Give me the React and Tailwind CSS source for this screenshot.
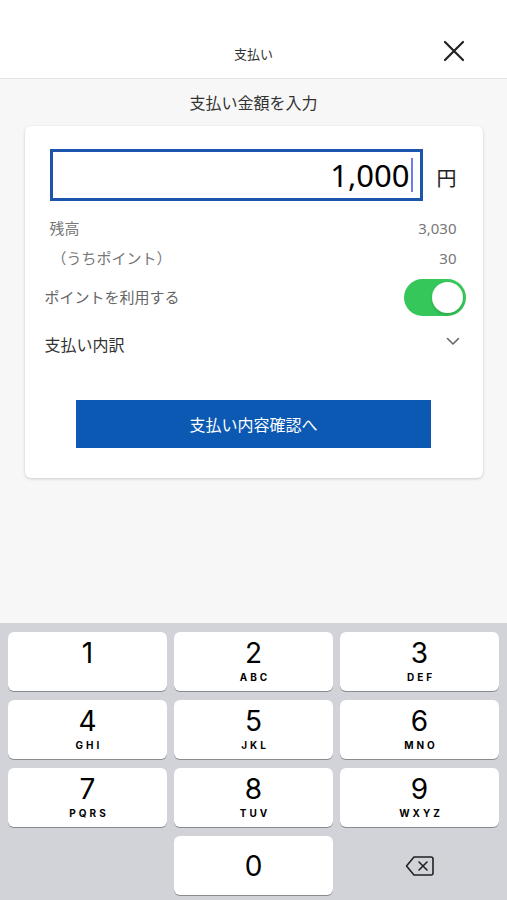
import React from 'react'

const jp = { fontFamily: '"Noto Sans CJK JP", "Noto Sans", sans-serif' }

const keys = [
  ['1', ''], ['2', 'ABC'], ['3', 'DEF'],
  ['4', 'GHI'], ['5', 'JKL'], ['6', 'MNO'],
  ['7', 'PQRS'], ['8', 'TUV'], ['9', 'WXYZ'],
]

const Key = ({ digit, letters }) => (
  <div className="h-[59px] bg-white rounded-[6px] shadow-[0_1px_0_#8a8b8f] flex flex-col items-center justify-start pt-[4px] font-['Inter',sans-serif] text-black">
    <span className="text-[28px] leading-[34px]">{digit}</span>
    {letters && <span className="text-[10px] font-bold tracking-[3px] pl-[3px] leading-[12px] mt-[1px]">{letters}</span>}
  </div>
)

const App = () => {
  return (
    <div className="w-[507px] h-[900px] flex flex-col bg-[#f7f7f7] overflow-hidden" style={jp}>
      <header className="h-[79px] bg-white border-b border-[#e3e3e3] relative">
        <div className="absolute top-[34px] left-0 right-0 h-[40px] flex items-center justify-center text-[13px] text-[#333]">支払い</div>
        <button className="absolute top-[38px] right-[40px] w-[26px] h-[26px] flex items-center justify-center">
          <svg width="22" height="22" viewBox="0 0 22 22" stroke="#222" strokeWidth="2.2" strokeLinecap="round">
            <path d="M2 2 L20 20 M20 2 L2 20" />
          </svg>
        </button>
      </header>

      <main className="flex-1 flex flex-col items-center">
        <h1 className="mt-[11px] text-[16px] leading-[24px] text-[#333]">支払い金額を入力</h1>
        <div className="mt-[12px] w-[458px] bg-white rounded-[6px] shadow-[0_1px_3px_rgba(0,0,0,0.18)] pt-[23px] pb-[30px]">
          <div className="flex items-center pl-[25px]">
            <div className="w-[373px] h-[52px] border-[3px] border-[#1d55ad] flex items-center justify-end pr-[7px]">
              <span className="text-[31px] text-black font-['Noto_Sans',sans-serif] leading-none">1,000</span>
              <span className="w-[2px] h-[34px] bg-[#6c7cf0] ml-[1px]" />
            </div>
            <span className="ml-[14px] text-[20px] text-[#222] mt-[6px]">円</span>
          </div>

          <div className="mt-[12px] h-[30px] flex items-center justify-between pl-[25px] pr-[26px] text-[15px] text-[#777]">
            <span>残高</span>
            <span className="font-['Noto_Sans',sans-serif]">3,030</span>
          </div>
          <div className="h-[30px] flex items-center justify-between pl-[27px] pr-[26px] text-[15px] text-[#777]">
            <span>（うちポイント）</span>
            <span className="font-['Noto_Sans',sans-serif]">30</span>
          </div>

          <div className="mt-[5px] h-[38px] flex items-center justify-between pl-[20px] pr-[17px]">
            <span className="text-[15px] text-[#666]">ポイントを利用する</span>
            <div className="w-[62px] h-[37px] rounded-full bg-[#35c759] flex items-center justify-end pr-[3px]">
              <div className="w-[31px] h-[31px] rounded-full bg-white shadow-[0_2px_3px_rgba(0,0,0,0.15)]" />
            </div>
          </div>

          <div className="mt-[10px] h-[36px] flex items-center justify-between pl-[20px] pr-[23px]">
            <span className="text-[16px] text-[#333]">支払い内訳</span>
            <svg width="14" height="9" viewBox="0 0 14 9" fill="none" stroke="#666" strokeWidth="1.6" strokeLinecap="round" strokeLinejoin="round" className="-mt-[6px]">
              <path d="M1.5 1.5 L7 7 L12.5 1.5" />
            </svg>
          </div>

          <div className="mt-[38px] flex justify-center">
            <button className="w-[355px] h-[48px] bg-[#0b59b3] text-white text-[16px]">支払い内容確認へ</button>
          </div>
        </div>
      </main>

      <div className="h-[277px] bg-[#d1d3d9] px-[8px] pt-[9px] grid grid-cols-3 gap-x-[7px] gap-y-[9px] content-start">
        {keys.map(([d, l]) => (
          <Key key={d} digit={d} letters={l} />
        ))}
        <div />
        <div className="h-[59px] bg-white rounded-[6px] shadow-[0_1px_0_#8a8b8f] flex items-center justify-center font-['Inter',sans-serif] text-[28px] text-black">0</div>
        <div className="h-[59px] flex items-center justify-center">
          <svg width="30" height="22" viewBox="0 0 30 22" fill="none" stroke="#222" strokeWidth="1.6" strokeLinejoin="round" strokeLinecap="round">
            <path d="M9 2 H26 a2 2 0 0 1 2 2 V18 a2 2 0 0 1 -2 2 H9 L1.5 11 Z" />
            <path d="M14 7 L22 15 M22 7 L14 15" />
          </svg>
        </div>
      </div>
    </div>
  )
}

export default App
